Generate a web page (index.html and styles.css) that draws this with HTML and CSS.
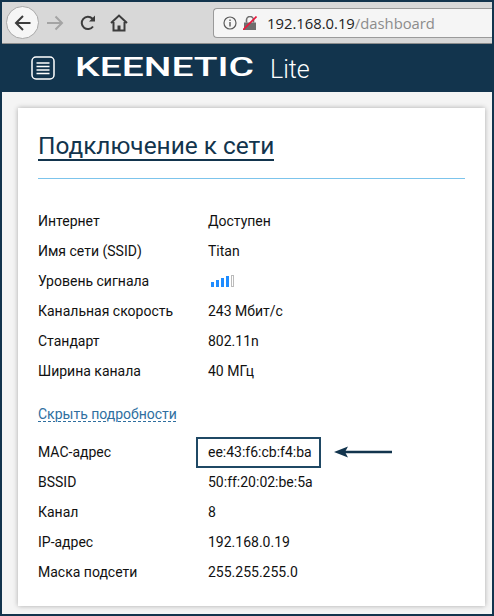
FILE: index.html

```html
<!DOCTYPE html>
<html lang="ru">
<head>
  <meta charset="UTF-8" />
  <title>Keenetic Lite</title>
  <link rel="stylesheet" href="styles.css">
</head>
<body>
  <div class="frame">
    <div class="toolbar">
      <span class="back">
        <svg width="20" height="20" viewBox="0 0 20 20"><path d="M17.500 10H3M10 3l-7 7 7 7" fill="none" stroke="#3c3c3c" stroke-width="2"/></svg>
      </span>
      <svg class="tool-icon forward" width="18" height="18" viewBox="0 0 18 18"><path d="M1 9h15M9.500 2.500L16 9l-6.500 6.500" fill="none" stroke="#a4a4a4" stroke-width="2"/></svg>
      <svg class="tool-icon reload" width="18" height="18" viewBox="0 0 18 18"><path d="M14 12.500A6.200 6.200 0 1 1 13.300 4.500L15 6" fill="none" stroke="#3c3c3c" stroke-width="2"/><path d="M16 1.500V7.500H10z" fill="#3c3c3c"/></svg>
      <svg class="tool-icon home" width="18" height="18" viewBox="0 0 18 18"><path d="M3.500 8v8.500h11V8M1 9l8-7.500L17 9" fill="none" stroke="#3c3c3c" stroke-width="2"/><path d="M7.500 16.500v-5h3v5z" fill="#3c3c3c"/></svg>
      <div class="address">
        <svg width="14" height="14" viewBox="0 0 14 14"><circle cx="7" cy="7" r="6" fill="none" stroke="#5a5a5a" stroke-width="1.200"/><path d="M7 6v4.500M7 3.500v1.500" stroke="#5a5a5a" stroke-width="1.400"/></svg>
        <svg class="lock" width="14" height="14" viewBox="0 0 14 14"><path d="M1 6.500h12V14H1z" fill="#6e6e6e"/><path d="M3.500 6.500V4a3.500 3.500 0 0 1 7 0v2.500" fill="none" stroke="#6e6e6e" stroke-width="1.600"/><path d="M0 14L13.500 0.500" stroke="#e8173c" stroke-width="1.600"/></svg>
        <span class="url">192.168.0.19<span class="url-path">/dashboard</span></span>
      </div>
    </div>

    <header class="topbar">
      <svg class="menu-icon" width="24" height="24" viewBox="0 0 24 24"><rect x="1" y="1" width="22" height="22" rx="4" fill="none" stroke="#fff" stroke-width="1.500"/><path d="M5.500 7h13M5.500 10.500h13M5.500 14h13M5.500 17.500h13" stroke="#fff" stroke-width="1.400"/></svg>
      <span class="logo">KEENETIC</span>
      <span class="model">Lite</span>
    </header>

    <main class="content">
      <section class="card">
        <div class="card-head">
          <h1>Подключение к сети</h1>
        </div>

        <div class="rows">
          <div class="row"><span>Интернет</span><span>Доступен</span></div>
          <div class="row"><span>Имя сети (SSID)</span><span>Titan</span></div>
          <div class="row"><span>Уровень сигнала</span>
            <span class="signal"><i class="b1"></i><i class="b2"></i><i class="b3"></i><i class="b4"></i><i class="b5"></i></span>
          </div>
          <div class="row"><span>Канальная скорость</span><span>243 Мбит/с</span></div>
          <div class="row"><span>Стандарт</span><span>802.11n</span></div>
          <div class="row"><span>Ширина канала</span><span>40 МГц</span></div>
        </div>

        <a class="toggle">Скрыть подробности</a>

        <div class="rows">
          <div class="row"><span>MAC-адрес</span>
            <span class="mac">ee:43:f6:cb:f4:ba
              <span class="mac-box"></span>
              <svg class="arrow" width="58" height="12" viewBox="0 0 58 12"><path d="M58 6H8" stroke="#12344d" stroke-width="2.500"/><path d="M0 6l14-5.500-3 5.500 3 5.500z" fill="#12344d"/></svg>
            </span>
          </div>
          <div class="row"><span>BSSID</span><span>50:ff:20:02:be:5a</span></div>
          <div class="row"><span>Канал</span><span>8</span></div>
          <div class="row"><span>IP-адрес</span><span>192.168.0.19</span></div>
          <div class="row"><span>Маска подсети</span><span>255.255.255.0</span></div>
        </div>
      </section>
    </main>
  </div>
</body>
</html>
```

FILE: styles.css

```css
html, body {
  margin: 0;
  padding: 0;
  height: 100%;
}
body {
  font-family: Roboto, "Liberation Sans", sans-serif;
  font-size: 14px;
  color: #111;
  background-color: #12344d;
  overflow: hidden;
}
.frame {
  margin: 2px 2px 0;
  height: 612px;
  display: flex;
  flex-direction: column;
}

.toolbar {
  height: 41px;
  flex: none;
  display: flex;
  align-items: center;
  background-color: #d8d8d8;
  border-bottom: 1px solid #8c8c8c;
  padding-left: 4px;
}
.back {
  width: 31px;
  height: 31px;
  flex: none;
  display: flex;
  align-items: center;
  justify-content: center;
  border: 1px solid #a9a9a9;
  border-radius: 50%;
  background-color: #f6f6f6;
}
.tool-icon {
  flex: none;
}
.forward {
  margin-left: 7px;
}
.reload {
  margin-left: 15px;
}
.home {
  margin-left: 13px;
}
.address {
  margin-left: 85px;
  flex: 1;
  height: 28px;
  display: flex;
  align-items: center;
  background-color: #f5f5f5;
  border: 1px solid #9a9a9a;
  border-right: 0;
  border-radius: 4px 0 0 4px;
  padding-left: 9px;
}
.lock {
  margin-left: 6px;
}
.url {
  margin-left: 10px;
  font-family: "Open Sans", sans-serif;
  font-size: 14.800px;
  color: #222;
}
.url-path {
  color: #8c8c8c;
}

.topbar {
  height: 48px;
  flex: none;
  display: flex;
  align-items: center;
  background-color: #12344d;
  color: #fff;
  padding-left: 29px;
}
.menu-icon {
  flex: none;
}
.logo {
  display: inline-block;
  margin-left: 20px;
  width: 178px;
  font-weight: 500;
  font-size: 25px;
  line-height: 24px;
  white-space: nowrap;
  transform: scaleX(1.560);
  transform-origin: left center;
}
.model {
  margin-left: 17px;
  margin-top: 2px;
  font-size: 25px;
  font-weight: 300;
}

.content {
  flex: 1;
  background-color: #f4f4f4;
  padding: 16px 7px 7px 16px;
}
.card {
  height: 498px;
  box-sizing: border-box;
  background-color: #fff;
  box-shadow: 0 0 5px rgba(0, 0, 0, 0.3);
  padding: 24px 20px 0;
}
.card-head {
  height: 46px;
  border-bottom: 1px solid #7cc4ec;
}
h1 {
  display: inline-block;
  margin: 0;
  font-size: 24.400px;
  font-weight: 400;
  line-height: 27px;
  color: #12344d;
  border-bottom: 2px solid #12344d;
}

.rows {
  margin-top: 27px;
}
.row {
  display: grid;
  grid-template-columns: 170px 1fr;
  height: 30px;
  align-items: center;
}
.toggle {
  display: inline-block;
  margin-top: 20px;
  color: #2f6f9f;
  line-height: 17px;
  text-decoration: underline dashed #2f6f9f 1px;
  text-underline-offset: 2px;
}
.toggle + .rows {
  margin-top: 14px;
}

.signal {
  display: flex;
  align-items: flex-end;
  gap: 2px;
  height: 12px;
  margin-left: 3px;
}
.signal i {
  display: block;
  width: 3px;
  background-color: #1e8cff;
}
.signal .b1 { height: 5px; }
.signal .b2 { height: 7px; }
.signal .b3 { height: 9px; }
.signal .b4 { height: 11px; }
.signal .b5 {
  height: 12px;
  box-sizing: border-box;
  background-color: #fff;
  border: 1px solid #bbb;
}

.mac {
  position: relative;
}
.mac-box {
  position: absolute;
  left: -12px;
  top: -7px;
  width: 121px;
  height: 27px;
  border: 2px solid #1f4864;
}
.arrow {
  position: absolute;
  left: 126px;
  top: 2px;
}
```
